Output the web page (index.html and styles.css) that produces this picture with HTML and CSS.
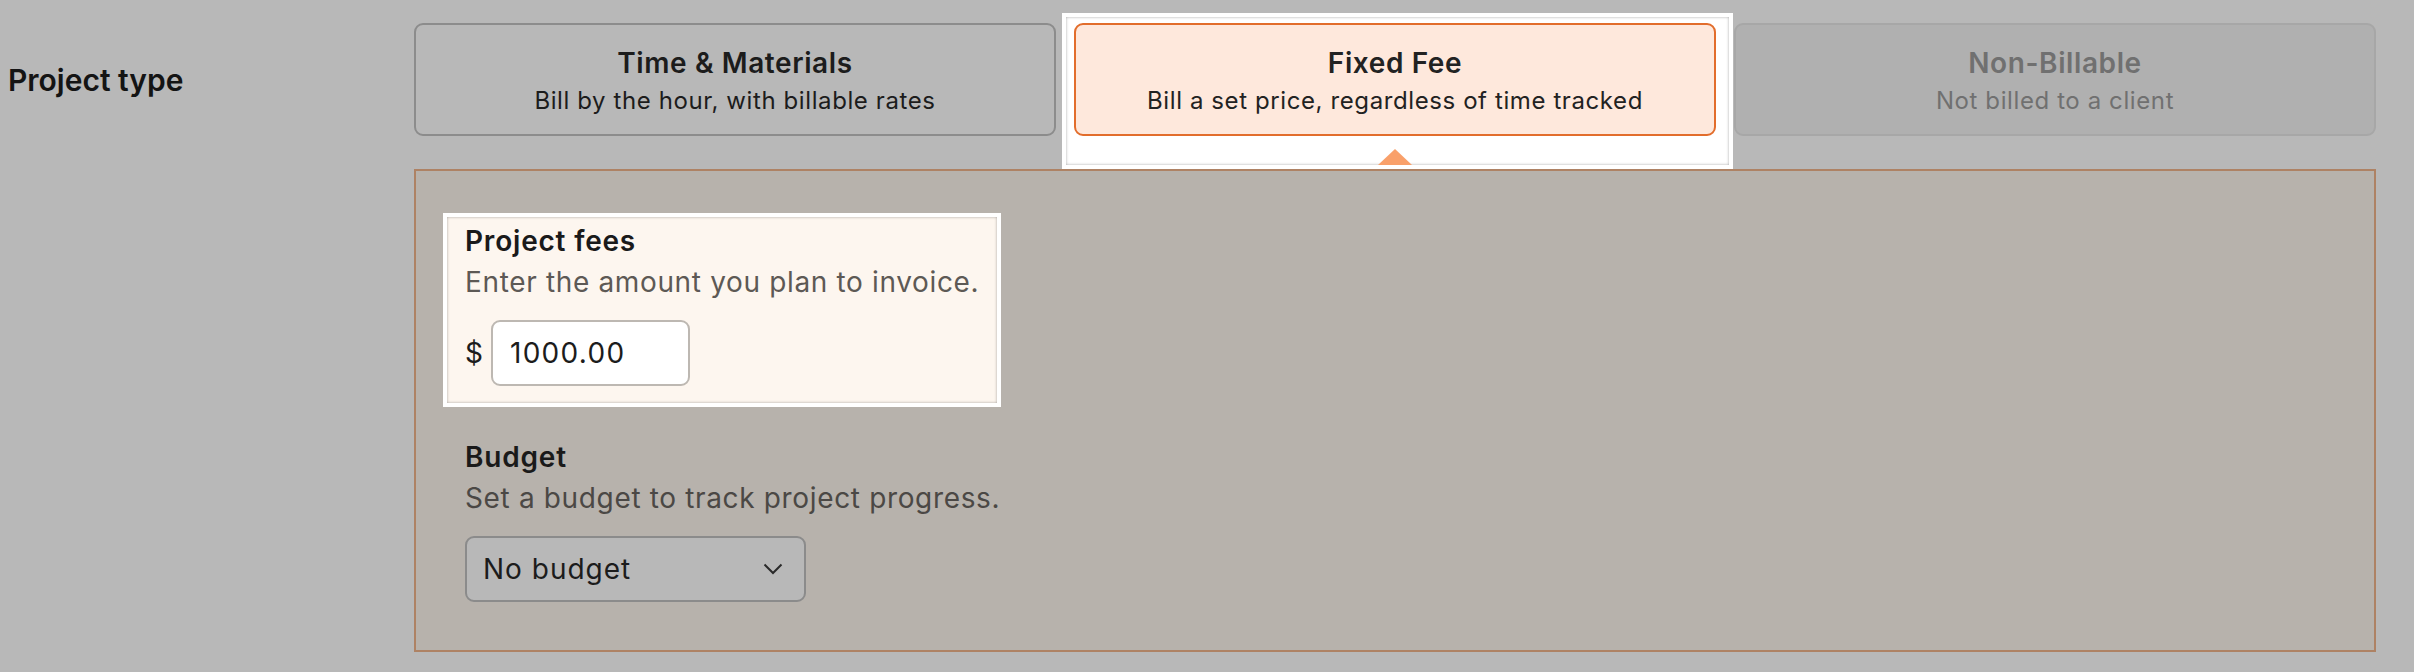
FILE: index.html
```html
<!DOCTYPE html>
<html lang="en">
<head>
  <meta charset="UTF-8">
  <meta name="viewport" content="width=device-width, initial-scale=1.0">
  <title>Project type</title>
  <link rel="stylesheet" href="styles.css">
</head>
<body>
  <div class="form-row">
    <div class="row-label">Project type</div>
    <div class="options">
      <div class="option">
        <div class="option-title">Time &amp; Materials</div>
        <div class="option-sub">Bill by the hour, with billable rates</div>
      </div>
      <div class="option-wrap">
        <!-- tour highlight behind the selected card -->
        <div class="spotlight"></div>
        <div class="option selected">
          <div class="option-title">Fixed Fee</div>
          <div class="option-sub">Bill a set price, regardless of time tracked</div>
        </div>
        <div class="pointer"></div>
      </div>
      <div class="option disabled">
        <div class="option-title">Non-Billable</div>
        <div class="option-sub">Not billed to a client</div>
      </div>
    </div>

    <div></div>
    <div class="panel">
      <div class="field spot">
        <div class="field-label">Project fees</div>
        <div class="field-help">Enter the amount you plan to invoice.</div>
        <div class="money">
          <span class="currency">$</span>
          <input class="text-input" type="text" value="1000.00">
        </div>
      </div>
      <div class="field budget">
        <div class="field-label">Budget</div>
        <div class="field-help">Set a budget to track project progress.</div>
        <div class="select">
          <span>No budget</span>
          <svg width="20" height="12" viewBox="0 0 20 12"><path d="M1.5 1.5 L10 10 L18.5 1.5" fill="none" stroke="#2a2a2a" stroke-width="2"/></svg>
        </div>
      </div>
    </div>
  </div>
</body>
</html>
```

FILE: styles.css
```css
body {
  margin: 0;
  padding: 23px 38px 0 8px;
  background: #b8b8b8;
  font-family: Inter, "Noto Sans", sans-serif;
  color: #1c1c1c;
}
.form-row {
  display: grid;
  grid-template-columns: 406px 1fr;
  row-gap: 33px;
  align-items: center;
}
.row-label {
  font-size: 30px;
  font-weight: 600;
  color: #141414;
}
.options {
  display: grid;
  grid-template-columns: repeat(3, 1fr);
  gap: 18px;
}
.option-wrap {
  position: relative;
}
.option {
  position: relative;
  box-sizing: border-box;
  height: 113px;
  padding-top: 19px;
  border: 2px solid #8c8c8c;
  border-radius: 9px;
  text-align: center;
}
.option-title {
  font-size: 28px;
  font-weight: 600;
  line-height: 38px;
  letter-spacing: 0.6px;
}
.option-sub {
  font-size: 24px;
  line-height: 38px;
  letter-spacing: 0.6px;
}
.option.selected {
  background: #fee8dc;
  border-color: #e26d2c;
  color: #222;
}
.option.disabled {
  background: #b0b0b0;
  border-color: #a7a7a7;
  color: #707070;
}
.spotlight {
  position: absolute;
  top: -10px;
  left: -12px;
  right: -17px;
  bottom: -33px;
  background: #fff;
  border: 4px solid #fff;
  box-shadow: inset 0 0 3px rgba(0, 0, 0, 0.35);
}
.pointer {
  position: absolute;
  top: calc(100% + 13px);
  left: 50%;
  margin-left: -17px;
  width: 0;
  height: 0;
  border-left: 17px solid transparent;
  border-right: 17px solid transparent;
  border-bottom: 16px solid #f9a06a;
}
.panel {
  background: #b7b2ac;
  border: 2px solid #ae8264;
  padding: 42px 49px 48px;
}
.field-label {
  font-size: 28px;
  font-weight: 600;
  line-height: 41px;
  letter-spacing: 0.8px;
  color: #1a1a1a;
}
.field-help {
  font-size: 28px;
  line-height: 41px;
  letter-spacing: 0.65px;
  white-space: nowrap;
  color: #4b4845;
}
.field.spot {
  width: 558px;
  box-sizing: border-box;
  margin-left: -22px;
  padding: 4px 20px 17px 18px;
  background: #fdf6ef;
  border: 4px solid #fff;
  box-shadow: inset 0 0 3px rgba(0, 0, 0, 0.35);
}
.spot .field-help {
  color: #5d5955;
}
.field.budget {
  margin-top: 30px;
}
.money {
  display: flex;
  align-items: center;
  margin-top: 17px;
}
.currency {
  font-size: 28px;
  margin-right: 8px;
}
.text-input {
  box-sizing: border-box;
  width: 199px;
  height: 66px;
  padding: 0 0 0 17px;
  border: 2px solid #bdb8b2;
  border-radius: 9px;
  background: #fff;
  font-family: Inter, "Noto Sans", sans-serif;
  font-size: 28px;
  letter-spacing: 1.3px;
  color: #1c1c1c;
}
.select {
  box-sizing: border-box;
  display: flex;
  align-items: center;
  justify-content: space-between;
  width: 341px;
  height: 66px;
  margin-top: 17px;
  padding: 0 21px 0 16px;
  border: 2px solid #8b8b8b;
  border-radius: 9px;
  background: #b8b8b8;
  font-size: 28px;
  letter-spacing: 1px;
  color: #1c1c1c;
}
```
